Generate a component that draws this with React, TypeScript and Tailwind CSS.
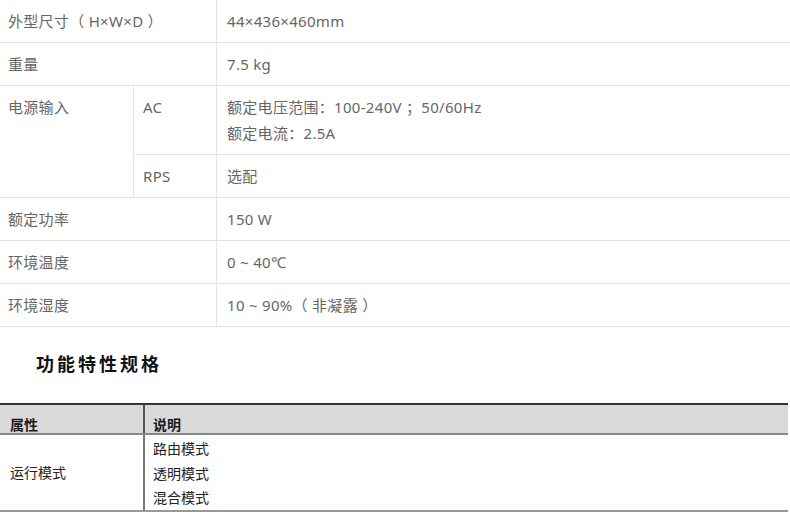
const sans = { fontFamily: '"Noto Sans", "Noto Sans CJK SC", sans-serif' };

function Row({ label, value }: { label: string; value: string }) {
  return (
    <div className="flex border-b border-[#e3e3e3]">
      <div className="w-[217px] shrink-0 border-r border-[#e3e3e3] pl-[8px] pt-[8px] pb-[8px] leading-[26px]">
        {label}
      </div>
      <div className="flex-1 pl-[10px] pt-[8px] pb-[8px] leading-[26px]">{value}</div>
    </div>
  );
}

export default function App() {
  return (
    <div className="w-[790px] h-[512px] overflow-hidden bg-white">
      {/* basic spec table */}
      <div className="text-[15px] tracking-[0.3px] text-[#666]" style={sans}>
        <Row label="外型尺寸（ H×W×D ）" value="44×436×460mm" />
        <Row label="重量" value="7.5 kg" />
        <div className="flex border-b border-[#e3e3e3]">
          <div className="w-[134px] shrink-0 border-r border-[#e3e3e3] pl-[8px] pt-[8px] leading-[26px]">
            电源输入
          </div>
          <div className="flex-1 flex flex-col">
            <div className="flex border-b border-[#e3e3e3]">
              <div className="w-[83px] shrink-0 border-r border-[#e3e3e3] pl-[9px] pt-[8px] pb-[8px] leading-[26px]">
                AC
              </div>
              <div className="flex-1 pl-[10px] pt-[8px] pb-[8px] leading-[26px]">
                <div>额定电压范围：100-240V ；50/60Hz</div>
                <div>额定电流：2.5A</div>
              </div>
            </div>
            <div className="flex">
              <div className="w-[83px] shrink-0 border-r border-[#e3e3e3] pl-[9px] pt-[8px] pb-[8px] leading-[26px]">
                RPS
              </div>
              <div className="flex-1 pl-[10px] pt-[8px] pb-[8px] leading-[26px]">选配</div>
            </div>
          </div>
        </div>
        <Row label="额定功率" value="150 W" />
        <Row label="环境温度" value="0 ~ 40℃" />
        <Row label="环境湿度" value="10 ~ 90%（ 非凝露 ）" />
      </div>

      <h2
        className="pl-[36px] pt-[23px] h-[76px] text-[18px] font-bold tracking-[3px] leading-[26px] text-[#111]"
        style={{ fontFamily: '"Noto Sans CJK SC", sans-serif' }}
      >
        功能特性规格
      </h2>

      {/* feature table */}
      <div
        className="w-[788px] text-[14px] text-[#222]"
        style={{ fontFamily: '"Noto Sans CJK SC", sans-serif' }}
      >
        <div className="flex h-[32px] border-t-2 border-[#333] border-b-2 border-b-[#888] bg-[#d9d9d9] font-bold text-[#1b1b1b]">
          <div className="w-[145px] shrink-0 border-r-2 border-[#555] pl-[10px] pt-[11px] leading-[16px]">
            属性
          </div>
          <div className="flex-1 pl-[8px] pt-[11px] leading-[16px]">说明</div>
        </div>
        <div className="flex border-b-2 border-[#999]">
          <div className="w-[145px] shrink-0 border-r-2 border-[#777] pl-[10px] flex items-center leading-[24px]">
            运行模式
          </div>
          <div className="flex-1 pl-[8px] pt-[1px] leading-[24.5px]">
            <div>路由模式</div>
            <div>透明模式</div>
            <div>混合模式</div>
          </div>
        </div>
      </div>
    </div>
  );
}
